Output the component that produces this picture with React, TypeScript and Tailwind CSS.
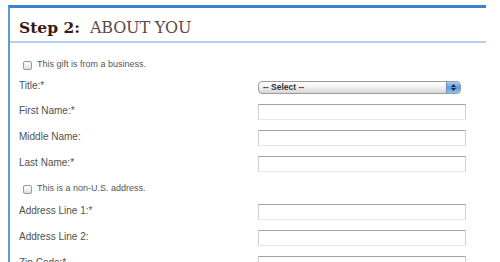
import React from 'react';

// Campo de texto estilo Mac (borde superior más oscuro)
const TextBox: React.FC = () => (
  <div className="w-[208px] h-[16px] bg-white border border-[#cfcfcf] border-t-[#a3a3a3] border-b-[#e6e6e6]" />
);

const SelectBox: React.FC = () => (
  <div className="relative w-[203px] h-[13px] rounded-[4px] border border-[#9b9b9b] bg-gradient-to-b from-white via-[#f0f0f0] to-[#d6d6d6] flex items-center overflow-hidden">
    <span className="pl-[4px] text-[8.5px] font-bold text-[#333] leading-none">-- Select --</span>
    <div className="absolute right-0 top-0 bottom-0 w-[14px] bg-gradient-to-b from-[#a9cdf5] via-[#5d9be4] to-[#8ec0f2] border-l border-[#6e8fb8] flex flex-col items-center justify-center gap-[1px]">
      <svg width="5" height="3" viewBox="0 0 5 3"><path d="M2.5 0 L5 3 L0 3 Z" fill="#1b2a44" /></svg>
      <svg width="5" height="3" viewBox="0 0 5 3"><path d="M0 0 L5 0 L2.5 3 Z" fill="#1b2a44" /></svg>
    </div>
  </div>
);

const CheckRow: React.FC<{ label: string; className?: string }> = ({ label, className }) => (
  <div className={`h-[20px] flex items-center pl-[13px] ${className ?? ''}`}>
    <span className="w-[9px] h-[9px] rounded-[2px] border border-[#999] bg-gradient-to-b from-white to-[#e2e2e2]" />
    <span className="ml-[5px] text-[9px] text-[#555]">{label}</span>
  </div>
);

const FieldRow: React.FC<{ label: string; h?: string; children: React.ReactNode }> = ({ label, h = 'h-[26px]', children }) => (
  <div className={`${h} flex items-center pl-[9px]`}>
    <span className="w-[239px] text-[10px] text-[#505050] -mt-[3px]">{label}</span>
    {children}
  </div>
);

export default function App() {
  return (
    <div className="w-[500px] h-[262px] bg-white overflow-hidden pt-[5px] font-['Liberation_Sans',Arial,sans-serif]">
      <div className="ml-[8px] w-[478px] h-[300px] border-t-[3px] border-l-2 border-t-[#3d84cd] border-l-[#5b9bdc]">
        {/* Encabezado del paso */}
        <div className="h-[35px] flex items-center pl-[9px] pt-[6px] border-b-2 border-[#b3d1f0] font-['DejaVu_Serif',serif]">
          <span className="text-[15.5px] font-bold text-[#3a1810]">Step 2:</span>
          <span className="ml-[10px] text-[16px] text-[#5a4a46] tracking-[-0.2px]">ABOUT YOU</span>
        </div>

        <div className="pt-[12px]">
          <CheckRow label="This gift is from a business." />
          <FieldRow label="Title:*" h="h-[24px]">
            <SelectBox />
          </FieldRow>
          <FieldRow label="First Name:*"><TextBox /></FieldRow>
          <FieldRow label="Middle Name:"><TextBox /></FieldRow>
          <FieldRow label="Last Name:*"><TextBox /></FieldRow>
          <CheckRow label="This is a non-U.S. address." className="mt-[2px]" />
          <FieldRow label="Address Line 1:*"><TextBox /></FieldRow>
          <FieldRow label="Address Line 2:"><TextBox /></FieldRow>
          <FieldRow label="Zip Code:*"><TextBox /></FieldRow>
        </div>
      </div>
    </div>
  );
}
